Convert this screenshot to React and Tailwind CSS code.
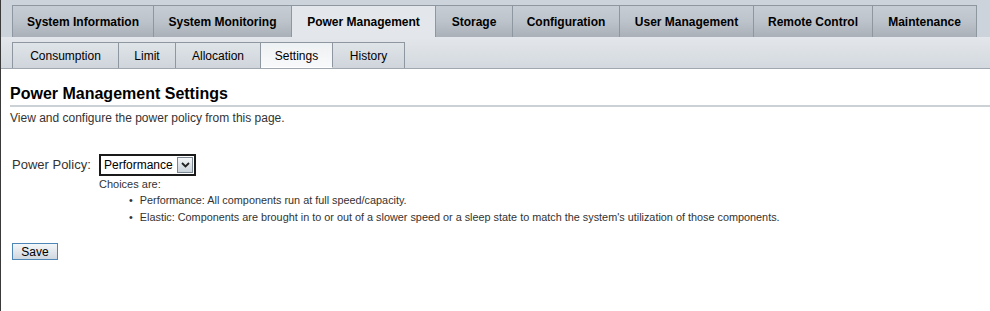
const mainTabs = [
  { label: "System Information", w: "w-[142px]" },
  { label: "System Monitoring", w: "w-[138px]" },
  { label: "Power Management", w: "w-[144px]", active: true },
  { label: "Storage", w: "w-[77px]" },
  { label: "Configuration", w: "w-[107px]" },
  { label: "User Management", w: "w-[134px]" },
  { label: "Remote Control", w: "w-[119px]" },
  { label: "Maintenance", w: "w-[104px]" },
];

const subTabs = [
  { label: "Consumption", w: "w-[107px]" },
  { label: "Limit", w: "w-[57px]" },
  { label: "Allocation", w: "w-[85px]" },
  { label: "Settings", w: "w-[72px]", active: true },
  { label: "History", w: "w-[72px]" },
];

const App = () => {
  return (
    <div className="h-[311px] w-[990px] border-l border-[#3a3a3a] bg-white font-['Liberation_Sans',Arial,sans-serif] text-black overflow-hidden">
      {/* top tabs */}
      <div className="flex pl-[11px] pt-[5px] bg-[#cdd3da] h-[37px]">
        {mainTabs.map((t, i) => (
          <div
            key={t.label}
            className={`${t.w} h-[32px] flex items-center justify-center text-[12px] font-bold border-t border-r border-[#8e969f] ${i === 0 ? "border-l" : ""} ${
              t.active
                ? "bg-[#e3e7eb] border-b-0"
                : "bg-gradient-to-b from-[#c7cdd4] via-[#bcc3ca] to-[#a9b0b8]"
            }`}
          >
            {t.label}
          </div>
        ))}
      </div>

      {/* sub tabs */}
      <div className="flex pl-[11px] pt-[5px] h-[32px] bg-gradient-to-b from-[#e3e7eb] to-[#d3d9de] border-b border-[#a0a7ae]">
        {subTabs.map((t, i) => (
          <div
            key={t.label}
            className={`${t.w} h-[26px] flex items-center justify-center text-[12px] pt-[1px] border-t border-r border-[#8e969f] ${i === 0 ? "border-l" : ""} ${
              t.active
                ? "bg-gradient-to-b from-[#eef1f3] to-[#f8f9fa] border-b border-b-white"
                : "bg-gradient-to-b from-[#dfe4e8] to-[#cfd5db]"
            }`}
          >
            {t.label}
          </div>
        ))}
      </div>

      {/* content */}
      <div className="pl-[9px] pt-[15px]">
        <h1 className="text-[16px] font-bold leading-[20px] pb-[1px] border-b-2 border-[#ccd1d6]">
          Power Management Settings
        </h1>
        <p className="mt-[4px] text-[12px] text-[#333] leading-[14px]">
          View and configure the power policy from this page.
        </p>

        <div className="flex mt-[29px] pl-[2px]">
          <div className="w-[87px] pt-[1px] text-[13px] text-[#333]">Power Policy:</div>
          <div className="flex flex-col">
            <div className="flex items-center w-[97px] h-[22px] border-2 border-[#1a1a1a] bg-white">
              <span className="flex-1 pl-[3px] text-[12px] leading-none whitespace-nowrap">Performance</span>
              <span className="w-[16px] h-[16px] mr-[1px] border border-[#7a8793] bg-gradient-to-b from-[#f4f6f8] to-[#c9d2da] flex items-center justify-center">
                <svg width="9" height="6" viewBox="0 0 9 6">
                  <path d="M1 1 L4.5 4.5 L8 1" fill="none" stroke="#222" strokeWidth="1.8" />
                </svg>
              </span>
            </div>
            <div className="mt-[1px] text-[11px] text-[#333] leading-[14px]">Choices are:</div>
            <ul className="mt-[1px] pl-[30px] text-[10.85px] text-[#333] leading-[17px]">
              <li className="flex gap-[7px]"><span>•</span>Performance: All components run at full speed/capacity.</li>
              <li className="flex gap-[7px]"><span>•</span>Elastic: Components are brought in to or out of a slower speed or a sleep state to match the system's utilization of those components.</li>
            </ul>
          </div>
        </div>

        <button className="mt-[17px] ml-[2px] w-[46px] h-[17px] border border-[#4f86b8] bg-gradient-to-b from-[#f5f7f9] to-[#cfd7df] text-[12px] leading-none">
          Save
        </button>
      </div>
    </div>
  );
};

export default App;
